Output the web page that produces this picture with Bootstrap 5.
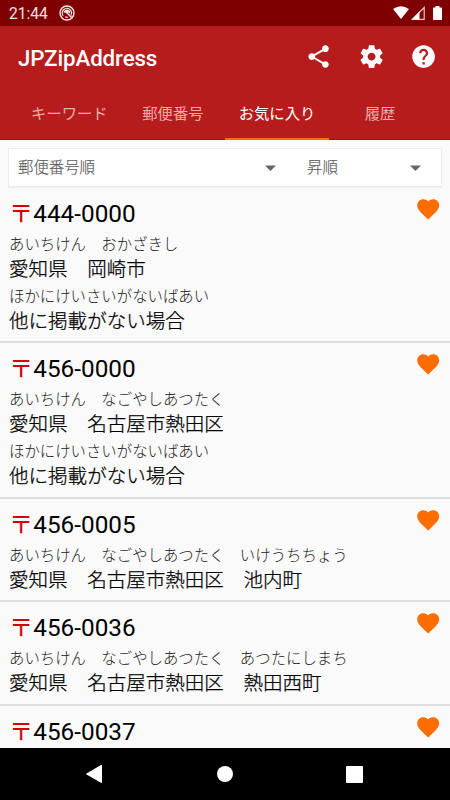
<!DOCTYPE html>
<html lang="ja">
<head>
<meta charset="utf-8">
<meta name="viewport" content="width=device-width, initial-scale=1">
<title>JPZipAddress</title>
<link href="https://cdn.jsdelivr.net/npm/bootstrap@5.3.0/dist/css/bootstrap.min.css" rel="stylesheet">
<style>
body{font-family:Roboto,"Noto Sans CJK JP",sans-serif;background:#fafafa;height:800px;width:450px}
svg{display:block;flex:none}
.status-bar{height:26px;background:#7f0000;font-size:15.6px;padding:0 8px 0 9px;color:#f3e0e0}
.clock{padding-top:3px;line-height:23px}
.dnd{margin-left:11px}
.signal{margin-left:2px}
.battery{margin-left:8px}
.app-bar{height:62px;background:#b71c1c;padding:0 13px 0 18px}
.app-title{font-size:22.3px;font-weight:500;letter-spacing:-.1px;line-height:28px;padding-top:1px}
.app-actions{gap:25px}
.app-tabs{height:52px;background:#b71c1c;padding-left:18px;border-bottom:1px solid #a80f0f}
.app-tab{width:103.6px;height:52px;font-size:15.3px;color:#eaabab;line-height:52px;text-align:center;text-indent:-1px}
.app-tab.active{color:#fff;box-shadow:inset 0 -2px #ff6d00;text-indent:0}
.sort-box{height:40px;margin:8px 8px 0 8px;background:#fff;border:1px solid #ececec;border-bottom-width:2px;font-size:15.4px;color:#5a5a5a;padding-left:9px;font-weight:300;-webkit-text-stroke:.15px}
.sort-box span{line-height:37px;padding-top:2px}
.sort-box svg{margin-top:1px}
.sort-key{width:289px;padding-right:31px}
.sort-dir{width:113.500px}
.results{height:560px}
.entry{height:155.3px;border-bottom:2px solid #dedede;padding:0 9px 0 9px;color:#000}
.entry.short-entry{height:103.5px}
.zip{height:43px;font-size:24.3px;line-height:36px;padding-top:8px}
.postmark{color:#d50000}
.yomi{font-size:15.4px;line-height:29px;height:27px;color:#222;font-weight:300}
.addr{font-size:19.55px;line-height:24.7px;height:24.7px;font-weight:300;-webkit-text-stroke:.25px}
.heart{margin-top:8px}
.nav-keys{height:52px;background:#000;padding:0 87px 0 86px}
</style>
<script src="https://cdn.jsdelivr.net/npm/bootstrap@5.3.0/dist/js/bootstrap.bundle.min.js"></script>
</head>
<body class="overflow-hidden d-flex flex-column">
<svg width="0" height="0" class="position-absolute"><defs>
<path id="heart" d="M12 21.35l-1.45-1.32C5.4 15.36 2 12.28 2 8.5 2 5.42 4.42 3 7.5 3c1.74 0 3.41.81 4.5 2.09C13.09 3.81 14.76 3 16.5 3 19.58 3 22 5.42 22 8.5c0 3.78-3.4 6.86-8.55 11.54z"/>
</defs></svg>

<div class="status-bar d-flex align-items-center">
  <span class="clock">21:44</span>
  <svg class="dnd" width="16" height="16" viewBox="0 0 16 16" fill="none" stroke="#f7e9e9"><circle cx="8" cy="8" r="7" stroke-width="1.4"/><path d="M4.2 10.8A4.6 4.6 0 1 1 11.8 10.5M6.2 11.8a4.6 4.6 0 0 0 3 .4" stroke-width="1.1"/><path d="M4.5 8Q4.8 4.7 8 4.4 11.2 4.7 11.4 8.8L9.3 7.5 7.6 8.8 6.5 7.4z" fill="#f7e9e9" stroke="none"/><path d="M8.3 8.3l4.3 4.2" stroke-width="1.5"/></svg>
  <div class="ms-auto d-flex align-items-center">
    <svg width="16" height="14" viewBox="0 0 16 14"><path d="M0 3Q8-2.400 16 3L8 13z" fill="#fff"/></svg>
    <svg class="signal" width="14" height="14" viewBox="0 0 14 14"><path d="M13.2 1.500v11.800H1.300z" fill="none" stroke="#e4c9c9" stroke-width="1.2"/><path d="M8.500 5.500V13.500H1z" fill="#fff"/></svg>
    <svg class="battery" width="9" height="14" viewBox="0 0 9 14"><path d="M2.500 0h4v1.500H8.200q.8 0 .8.8v11q0 .7-.8.7H.8q-.8 0-.8-.7v-11q0-.8.8-.8h1.700z" fill="#fff"/></svg>
  </div>
</div>

<header class="app-bar d-flex align-items-center text-white">
  <div class="app-title">JPZipAddress</div>
  <div class="app-actions ms-auto d-flex align-items-center">
    <svg width="27.2" height="27.2" viewBox="0 0 24 24" fill="#fff"><path d="M18 16.08c-.76 0-1.44.3-1.96.77L8.91 12.7c.05-.23.09-.46.09-.7s-.04-.47-.09-.7l7.05-4.11c.54.5 1.25.81 2.04.81 1.66 0 3-1.34 3-3s-1.34-3-3-3-3 1.34-3 3c0 .24.04.47.09.7L8.04 9.81C7.5 9.31 6.79 9 6 9c-1.66 0-3 1.34-3 3s1.34 3 3 3c.79 0 1.5-.31 2.04-.81l7.12 4.16c-.05.21-.08.43-.08.65 0 1.61 1.31 2.92 2.92 2.92s2.92-1.31 2.92-2.92-1.31-2.92-2.92-2.92z"/></svg>
    <svg width="27.2" height="27.2" viewBox="0 0 24 24" fill="#fff"><path d="M19.43 12.98c.04-.32.07-.64.07-.98s-.03-.66-.07-.98l2.11-1.65c.19-.15.24-.42.12-.64l-2-3.46c-.12-.22-.39-.3-.61-.22l-2.49 1c-.52-.4-1.08-.73-1.69-.98l-.38-2.65C14.46 2.18 14.25 2 14 2h-4c-.25 0-.46.18-.49.42l-.38 2.65c-.61.25-1.17.59-1.69.98l-2.49-1c-.23-.09-.49 0-.61.22l-2 3.46c-.13.22-.07.49.12.64l2.11 1.65c-.04.32-.07.65-.07.98s.03.66.07.98l-2.11 1.65c-.19.15-.24.42-.12.64l2 3.46c.12.22.39.3.61.22l2.49-1c.52.4 1.08.73 1.69.98l.38 2.65c.03.24.24.42.49.42h4c.25 0 .46-.18.49-.42l.38-2.65c.61-.25 1.17-.59 1.69-.98l2.49 1c.23.09.49 0 .61-.22l2-3.46c.12-.22.07-.49-.12-.64l-2.11-1.65zM12 15.5c-1.93 0-3.5-1.57-3.5-3.5s1.57-3.5 3.5-3.5 3.5 1.57 3.5 3.5-1.57 3.5-3.5 3.5z"/></svg>
    <svg width="27.2" height="27.2" viewBox="0 0 24 24" fill="#fff"><path d="M12 2C6.48 2 2 6.48 2 12s4.48 10 10 10 10-4.48 10-10S17.52 2 12 2zm1 17h-2v-2h2v2zm2.07-7.75l-.9.92C13.45 12.9 13 13.5 13 15h-2v-.5c0-1.1.45-2.1 1.17-2.83l1.24-1.26c.37-.36.59-.86.59-1.41 0-1.1-.9-2-2-2s-2 .9-2 2H8c0-2.21 1.79-4 4-4s4 1.79 4 4c0 .88-.36 1.68-.93 2.25z"/></svg>
  </div>
</header>

<nav class="app-tabs d-flex">
  <div class="app-tab">キーワード</div><div class="app-tab">郵便番号</div><div class="app-tab active">お気に入り</div><div class="app-tab">履歴</div>
</nav>

<div class="sort-box d-flex align-items-center flex-shrink-0">
  <div class="sort-key d-flex align-items-center justify-content-between"><span>郵便番号順</span><svg width="11" height="6" viewBox="0 0 11 6"><path d="M0 .5h11L5.500 6z" fill="#666"/></svg></div>
  <div class="sort-dir d-flex align-items-center justify-content-between"><span>昇順</span><svg width="11" height="6" viewBox="0 0 11 6"><path d="M0 .5h11L5.500 6z" fill="#666"/></svg></div>
</div>

<main class="results overflow-hidden">
  <section class="entry d-flex justify-content-between">
    <div><div class="zip"><span class="postmark">〒</span>444-0000</div>
    <div class="yomi">あいちけん　おかざきし</div><div class="addr">愛知県　岡崎市</div>
    <div class="yomi">ほかにけいさいがないばあい</div><div class="addr">他に掲載がない場合</div></div>
    <svg class="heart" width="26.4" height="26.4" viewBox="0 0 24 24" fill="#ff6d00"><use href="#heart"/></svg>
  </section>
  <section class="entry d-flex justify-content-between">
    <div><div class="zip"><span class="postmark">〒</span>456-0000</div>
    <div class="yomi">あいちけん　なごやしあつたく</div><div class="addr">愛知県　名古屋市熱田区</div>
    <div class="yomi">ほかにけいさいがないばあい</div><div class="addr">他に掲載がない場合</div></div>
    <svg class="heart" width="26.4" height="26.4" viewBox="0 0 24 24" fill="#ff6d00"><use href="#heart"/></svg>
  </section>
  <section class="entry short-entry d-flex justify-content-between">
    <div><div class="zip"><span class="postmark">〒</span>456-0005</div>
    <div class="yomi">あいちけん　なごやしあつたく　いけうちちょう</div><div class="addr">愛知県　名古屋市熱田区　池内町</div></div>
    <svg class="heart" width="26.4" height="26.4" viewBox="0 0 24 24" fill="#ff6d00"><use href="#heart"/></svg>
  </section>
  <section class="entry short-entry d-flex justify-content-between">
    <div><div class="zip"><span class="postmark">〒</span>456-0036</div>
    <div class="yomi">あいちけん　なごやしあつたく　あつたにしまち</div><div class="addr">愛知県　名古屋市熱田区　熱田西町</div></div>
    <svg class="heart" width="26.4" height="26.4" viewBox="0 0 24 24" fill="#ff6d00"><use href="#heart"/></svg>
  </section>
  <section class="entry short-entry d-flex justify-content-between">
    <div><div class="zip"><span class="postmark">〒</span>456-0037</div></div>
    <svg class="heart" width="26.4" height="26.4" viewBox="0 0 24 24" fill="#ff6d00"><use href="#heart"/></svg>
  </section>
</main>

<footer class="nav-keys d-flex align-items-center justify-content-between flex-shrink-0">
  <svg width="16" height="18" viewBox="0 0 16 18" fill="#fff"><path d="M15 0q1-.4 1 .7v16.6q0 1-1 .5L.5 9.5Q-.4 9 .5 8.500z"/></svg>
  <svg width="17" height="16" viewBox="0 0 17 16"><circle cx="9" cy="8" r="8" fill="#fff"/></svg>
  <svg width="17" height="17" viewBox="0 0 17 17"><rect width="17" height="17" rx="1" fill="#fff"/></svg>
</footer>
</body>
</html>
